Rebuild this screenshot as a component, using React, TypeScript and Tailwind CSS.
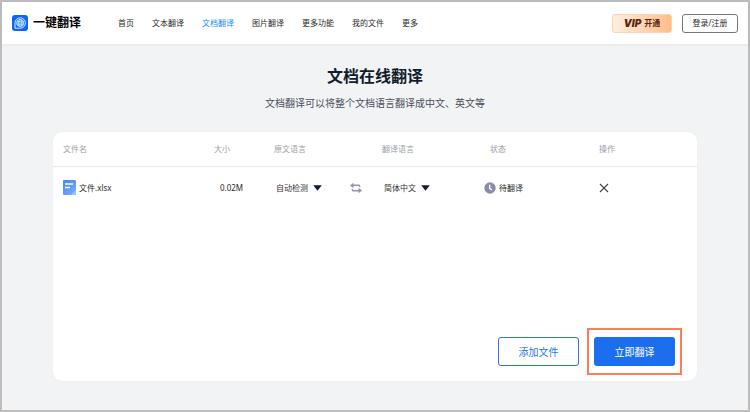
import React from 'react';

const NAV = ['首页', '文本翻译', '文档翻译', '图片翻译', '更多功能', '我的文件', '更多'];

function Logo() {
  return (
    <svg width="16" height="16" viewBox="0 0 16 16" fill="none" aria-hidden="true">
      <rect width="16" height="16" rx="3" fill="#0b66f5" />
      <path d="M3 13.3V8a5.2 5.2 0 1 1 5.2 5.2H3Z" stroke="#d6e9ff" strokeWidth="1" />
      <circle cx="8.2" cy="8" r="3.6" fill="#5aa2fb" stroke="#d6e9ff" strokeWidth="0.8" />
      <ellipse cx="8.2" cy="8" rx="1.7" ry="3.6" stroke="#d6e9ff" strokeWidth="0.6" />
      <path d="M4.8 6.8h6.8M4.8 9.2h6.8" stroke="#d6e9ff" strokeWidth="0.6" />
    </svg>
  );
}

function FileIcon() {
  return (
    <svg width="13" height="15" viewBox="0 0 13 15" fill="none" aria-hidden="true">
      <defs>
        <linearGradient id="file-fill" x1="0" y1="0" x2="13" y2="15" gradientUnits="userSpaceOnUse">
          <stop stopColor="#3f86f5" />
          <stop offset="1" stopColor="#7db0fb" />
        </linearGradient>
      </defs>
      <rect width="13" height="15" rx="1" fill="url(#file-fill)" />
      <path d="M13 10v4a1 1 0 0 1-1 1H8Z" fill="#9cc3fc" />
      <path d="M2 4h8M2 7.500h5" stroke="#fff" strokeWidth="1.500" />
    </svg>
  );
}

function SwapIcon() {
  return (
    <svg width="12" height="12" viewBox="0 0 12 12" fill="none" aria-hidden="true">
      <path d="M0 3.500 3.500 0.700v5.600Z M12 8.500 8.500 5.700v5.600Z" fill="#8f92ab" />
      <path d="M3 3.300h6l1 1.500M9 8.700H3L2 7.200" stroke="#8f92ab" strokeWidth="1.500" />
    </svg>
  );
}

function ClockIcon() {
  return (
    <svg width="12" height="12" viewBox="0 0 12 12" fill="none" aria-hidden="true">
      <circle cx="6" cy="6" r="5.700" fill="#8a8da8" />
      <path d="M5.700 2.800v3.500l2.300 1.700" stroke="#fff" strokeWidth="1.300" />
    </svg>
  );
}

function LanguageSelect({ label, options }: { label: string; options: string[] }) {
  return (
    <div className="relative flex w-[46px] items-center">
      <select
        aria-label={label}
        className="w-full cursor-pointer appearance-none bg-transparent text-[8px] leading-3 text-[#333] outline-none"
      >
        {options.map((o) => (
          <option key={o}>{o}</option>
        ))}
      </select>
      <svg
        className="pointer-events-none absolute right-0"
        width="9"
        height="6"
        viewBox="0 0 9 6"
        aria-hidden="true"
      >
        <path d="M0.200 0.300h8.600L4.500 5.800Z" fill="#17173a" />
      </svg>
    </div>
  );
}

export default function App() {
  return (
    <div className="flex min-h-screen flex-col border-2 border-[#bdbdbd] bg-[#f2f3f5] font-['Noto_Sans','Noto_Sans_CJK_SC',sans-serif] text-[8px] leading-3 text-[#2b2b2b]">
      <header className="flex h-[42px] shrink-0 items-center bg-white px-[10px] shadow-[0_1px_3px_rgba(0,0,0,0.06)]">
        <a href="#home" className="flex items-center gap-[5px] text-xs font-bold text-black">
          <Logo />
          一键翻译
        </a>
        <nav className="ml-[37px] flex gap-[18px]">
          {NAV.map((item) => (
            <a
              key={item}
              href="#nav"
              className={item === '文档翻译' ? 'whitespace-nowrap text-[#1a8cff]' : 'whitespace-nowrap'}
            >
              {item}
            </a>
          ))}
        </nav>
        <div className="ml-auto flex gap-[10px]">
          <button className="flex h-[19px] w-[60px] items-center justify-center gap-[3px] rounded-[3px] border border-[#fbd3b0] bg-linear-to-r from-[#ffeee0] to-[#fdbd88] font-bold text-[#5a2412]">
            <span className="font-['Inter',sans-serif] text-[10px] font-black italic">VIP</span>
            开通
          </button>
          <button className="h-[19px] w-14 rounded-[3px] border border-[#777]">登录/注册</button>
        </div>
      </header>

      <main className="flex flex-1 flex-col px-[51px] pt-[22px] pb-[29px]">
        <h1 className="text-center text-base leading-5 font-bold text-[#111c2d]">文档在线翻译</h1>
        <p className="mt-[9px] text-center text-[10px] leading-4 text-[#4a4f5c]">
          文档翻译可以将整个文档语言翻译成中文、英文等
        </p>

        <section className="mt-[21px] flex flex-1 flex-col rounded-[9px] bg-white shadow-[0_0_2px_rgba(0,0,0,0.06)]">
          <table className="w-full table-fixed text-left">
            <colgroup>
              <col className="w-[161px]" />
              <col className="w-[60px]" />
              <col className="w-[76px]" />
              <col className="w-[32px]" />
              <col className="w-[102px]" />
              <col className="w-[115px]" />
              <col className="w-[98px]" />
            </colgroup>
            <thead>
              <tr className="h-[34px] border-b border-[#e8eaee] text-[#9a9db0]">
                <th className="pl-[10px] font-normal">文件名</th>
                <th className="font-normal">大小</th>
                <th className="font-normal">原文语言</th>
                <td />
                <th className="font-normal">翻译语言</th>
                <th className="pl-[6px] font-normal">状态</th>
                <th className="font-normal">操作</th>
              </tr>
            </thead>
            <tbody>
              <tr className="h-[43px]">
                <td className="pl-[10px]">
                  <span className="flex items-center gap-[3px]">
                    <FileIcon />
                    文件.xlsx
                  </span>
                </td>
                <td className="pl-[6px]">0.02M</td>
                <td className="pl-[2px]">
                  <LanguageSelect label="原文语言" options={['自动检测', '英语']} />
                </td>
                <td>
                  <button aria-label="交换语言" className="flex">
                    <SwapIcon />
                  </button>
                </td>
                <td className="pl-[2px]">
                  <LanguageSelect label="翻译语言" options={['简体中文', '英语']} />
                </td>
                <td>
                  <span className="flex items-center gap-[3px]">
                    <ClockIcon />
                    待翻译
                  </span>
                </td>
                <td>
                  <button aria-label="删除" className="flex">
                    <svg width="10" height="10" viewBox="0 0 10 10" aria-hidden="true">
                      <path d="M1 1l8 8M9 1l-8 8" stroke="#444" strokeWidth="1.100" />
                    </svg>
                  </button>
                </td>
              </tr>
            </tbody>
          </table>

          <div className="mt-auto flex items-center justify-end gap-2 pr-[15px] pb-[6px] text-[10px]">
            <button className="h-[29px] w-[81px] rounded-[3px] border border-[#2b74e2] text-[#2b74e2]">
              添加文件
            </button>
            <div className="border-2 border-[#f97f55] px-[5px] py-[7px]">
              <button className="block h-[29px] w-[81px] rounded-[3px] bg-[#1b6fef] text-white">
                立即翻译
              </button>
            </div>
          </div>
        </section>
      </main>
    </div>
  );
}
